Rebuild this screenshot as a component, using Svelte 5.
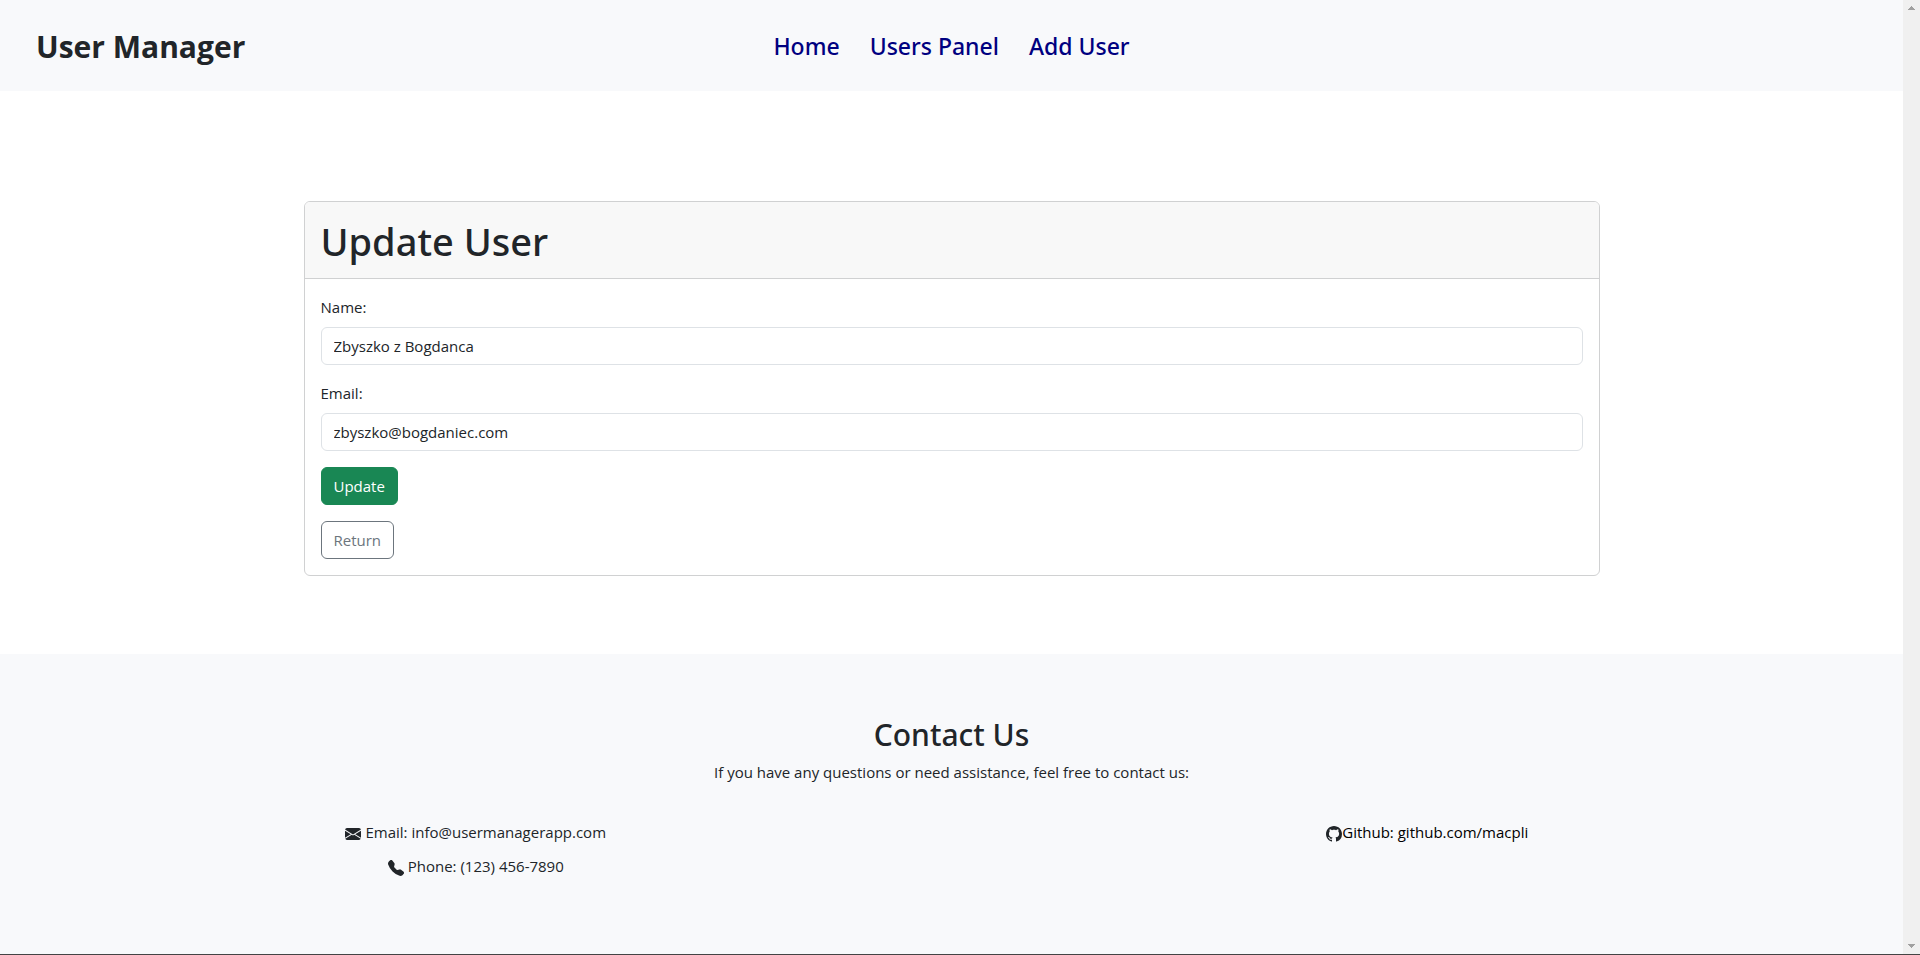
<script>
  let name = $state('Zbyszko z Bogdanca');
  let email = $state('zbyszko@bogdaniec.com');

  const links = ['Home', 'Users Panel', 'Add User'];
</script>

<div class="window">
  <div class="page">
    <header>
      <a class="brand" href="#home">User Manager</a>
      <nav>
        {#each links as link}
          <a href="#{link}">{link}</a>
        {/each}
      </nav>
    </header>

    <main>
      <section class="card">
        <h1>Update User</h1>
        <form onsubmit={(event) => event.preventDefault()}>
          <div class="field">
            <label for="name">Name:</label>
            <input id="name" type="text" bind:value={name} />
          </div>
          <div class="field">
            <label for="email">Email:</label>
            <input id="email" type="email" bind:value={email} />
          </div>
          <button class="update" type="submit">Update</button>
          <button class="return" type="button">Return</button>
        </form>
      </section>
    </main>

    <footer>
      <h2>Contact Us</h2>
      <p>If you have any questions or need assistance, feel free to contact us:</p>
      <div class="contacts">
        <ul>
          <li>
            <svg viewBox="0 0 16 16" aria-hidden="true"><path d="M.05 3.555A2 2 0 0 1 2 2h12a2 2 0 0 1 1.95 1.555L8 8.414zM0 4.697v7.104l5.803-3.558zM6.761 8.83l-6.57 4.027A2 2 0 0 0 2 14h12a2 2 0 0 0 1.808-1.144l-6.57-4.027L8 9.586zm3.436-.586L16 11.801V4.697z" /></svg>
            <span>Email: info@usermanagerapp.com</span>
          </li>
          <li>
            <svg viewBox="0 0 16 16" aria-hidden="true"><path fill-rule="evenodd" d="M1.885.511a1.745 1.745 0 0 1 2.61.163L6.29 2.98c.329.423.445.974.315 1.494l-.547 2.19a.68.68 0 0 0 .178.643l2.457 2.457a.68.68 0 0 0 .644.178l2.189-.547a1.75 1.75 0 0 1 1.494.315l2.306 1.794c.829.645.905 1.87.163 2.611l-1.034 1.034c-.74.74-1.846 1.065-2.877.702a18.6 18.6 0 0 1-7.01-4.42 18.6 18.6 0 0 1-4.42-7.009c-.362-1.03-.037-2.137.703-2.877z" /></svg>
            <span>Phone: (123) 456-7890</span>
          </li>
        </ul>
        <ul>
          <li class="github">
            <svg viewBox="0 0 16 16" aria-hidden="true"><path d="M8 0C3.58 0 0 3.58 0 8c0 3.54 2.29 6.53 5.47 7.59.4.07.55-.17.55-.38 0-.19-.01-.82-.01-1.49-2.01.37-2.53-.49-2.69-.94-.09-.23-.48-.94-.82-1.13-.28-.15-.68-.52-.01-.53.63-.01 1.08.58 1.23.82.72 1.21 1.87.87 2.33.66.07-.52.28-.87.51-1.07-1.78-.2-3.64-.89-3.64-3.95 0-.87.31-1.59.82-2.15-.08-.2-.36-1.02.08-2.12 0 0 .67-.21 2.2.82.64-.18 1.32-.27 2-.27s1.36.09 2 .27c1.53-1.04 2.2-.82 2.2-.82.44 1.1.16 1.92.08 2.12.51.56.82 1.27.82 2.15 0 3.07-1.87 3.75-3.65 3.95.29.25.54.73.54 1.48 0 1.07-.01 1.93-.01 2.2 0 .21.15.46.55.38A8.01 8.01 0 0 0 16 8c0-4.42-3.58-8-8-8" /></svg>
            <a href="#github">Github: github.com/macpli</a>
          </li>
        </ul>
      </div>
    </footer>
  </div>

  <div class="scrollbar" aria-hidden="true">
    <svg viewBox="0 0 17 17" shape-rendering="crispEdges"><path d="M8 6h1v1h1v1h1v1h1v1H5V9h1V8h1V7h1z" /></svg>
    <svg viewBox="0 0 17 17" shape-rendering="crispEdges"><path d="M5 7h7v1h-1v1h-1v1H9v1H8v-1H7V9H6V8H5z" /></svg>
  </div>
</div>

<style>
  :global(body) {
    margin: 0;
    background: #fff;
  }

  .window,
  .window * {
    box-sizing: border-box;
  }

  .window {
    display: grid;
    grid-template-columns: 1fr 17px;
    min-height: 100vh;
    border-bottom: 1px solid #444;
    color: #212529;
    font-family: 'Open Sans', 'Noto Sans', sans-serif;
    font-size: 15px;
    line-height: 24px;
  }

  .page {
    display: flex;
    flex-direction: column;
  }

  header {
    display: grid;
    grid-template-columns: 1fr auto 1fr;
    align-items: center;
    padding: 23px 36px 20px;
    background: #f8f9fb;
  }

  .brand {
    color: #212529;
    font-size: 30px;
    font-weight: 700;
    line-height: 48px;
    text-decoration: none;
  }

  nav {
    display: flex;
    gap: 30px;
    padding-bottom: 2px;
  }

  nav a {
    color: #000080;
    font-family: 'Noto Sans', 'Open Sans', sans-serif;
    font-size: 23px;
    font-weight: 500;
    line-height: 36px;
    text-decoration: none;
  }

  main {
    padding: 110px 24px 78px;
  }

  .card {
    max-width: 1296px;
    margin: 0 auto;
    overflow: hidden;
    border: 1px solid #d0d1d2;
    border-radius: 6px;
  }

  h1,
  h2,
  p,
  ul {
    margin: 0;
    padding: 0;
  }

  h1,
  h2 {
    font-family: 'Noto Sans', 'Open Sans', sans-serif;
    font-weight: 500;
  }

  h1 {
    padding: 9px 16px 7px;
    border-bottom: 1px solid #d0d1d2;
    background: #f8f8f8;
    font-size: 38px;
    line-height: 60px;
  }

  form {
    display: flex;
    flex-direction: column;
    align-items: flex-start;
    gap: 16px;
    padding: 16px;
  }

  .field {
    display: flex;
    flex-direction: column;
    gap: 8px;
    width: 100%;
  }

  input,
  button {
    height: 38px;
    padding: 6px 12px;
    border: 1px solid #dee2e6;
    border-radius: 6px;
    background: #fff;
    color: #212529;
    font: inherit;
  }

  .update {
    border-color: #198754;
    background: #198754;
    color: #fff;
  }

  .return {
    border-color: #6c757d;
    color: #6c757d;
  }

  footer {
    flex: 1;
    padding: 62px 0 60px;
    background: #f8f9fb;
    text-align: center;
  }

  h2 {
    margin-bottom: 6px;
    font-size: 30px;
    line-height: 38px;
  }

  .contacts {
    display: grid;
    grid-template-columns: 1fr 1fr;
    margin-top: 36px;
  }

  ul {
    display: flex;
    flex-direction: column;
    gap: 10px;
    list-style: none;
  }

  li {
    display: flex;
    align-items: center;
    justify-content: center;
    gap: 4px;
  }

  li svg {
    width: 16px;
    height: 16px;
    margin-top: 4px;
    fill: #212529;
  }

  .github {
    gap: 0;
  }

  .github a {
    color: #000;
    text-decoration: none;
  }

  .scrollbar {
    display: flex;
    flex-direction: column;
    justify-content: space-between;
    background: #f0f0f0;
  }

  .scrollbar svg {
    width: 17px;
    height: 17px;
    fill: #a0a0a0;
  }
</style>
